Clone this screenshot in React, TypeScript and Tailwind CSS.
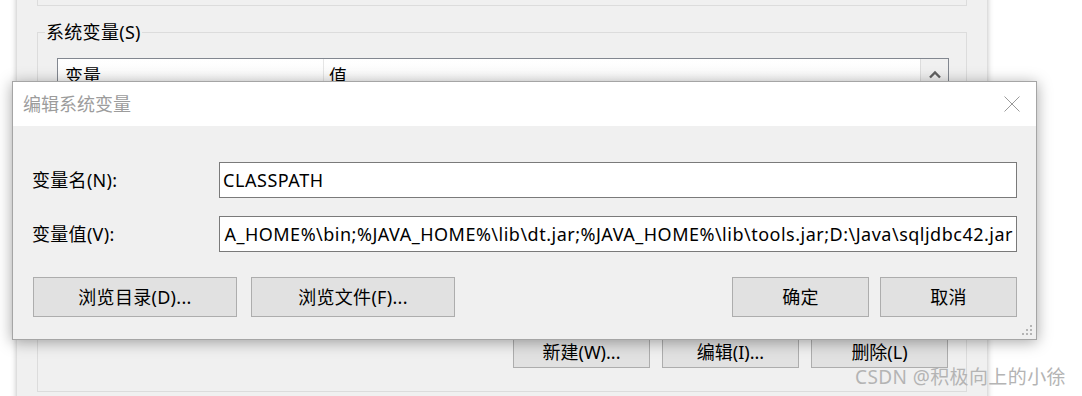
import { useState } from 'react';

const FONT = { fontFamily: '"Noto Sans", "Noto Sans CJK SC", sans-serif' };

function WinButton({ label, className = '' }: { label: string; className?: string }) {
  return (
    <button
      className={`h-[40px] bg-[#e1e1e1] border border-[#adadad] text-[18px] leading-none tracking-[0.3px] text-black flex items-center justify-center ${className}`}
    >
      {label}
    </button>
  );
}

// 背景里的 "环境变量" 窗口
function EnvWindow() {
  return (
    <div className="absolute left-[17px] top-[-40px] w-[970px] h-[460px] bg-[#f0f0f0] shadow-[0_0_6px_rgba(0,0,0,0.3)] px-[20px]">
      {/* 上面的用户变量分组只露出底边 */}
      <div className="h-[46px] border-x border-b border-[#dcdcdc]" />

      <fieldset className="mt-[16px] border border-[#dcdcdc]">
        <legend className="ml-[7px] px-[1px] text-[18px] leading-[20px] tracking-[0.3px] text-black">系统变量(S)</legend>

        <div className="pl-[19px] pb-[23px]">
          <div className="mt-[16px] w-[892px] h-[266px] bg-white border border-[#828790] flex">
            <div className="flex-1 flex flex-col">
              <div className="h-[34px] flex bg-gradient-to-b from-white to-[#f7f7f7] text-[18px] text-black">
                <div className="w-[266px] pl-[7px] flex items-center border-r border-[#e5e5e5]">变量</div>
                <div className="flex-1 pl-[5px] flex items-center">值</div>
              </div>
            </div>
            <div className="w-[28px] bg-[#f0f0f0] border-l border-[#dcdcdc] flex justify-center pt-[11px]">
              <svg width="12" height="9" viewBox="0 0 12 9">
                <path d="M1 7.5 L6 2.5 L11 7.5" fill="none" stroke="#606060" strokeWidth="2.4" />
              </svg>
            </div>
          </div>

          <div className="mt-[12px] w-[892px] flex justify-end gap-[12px] pr-[1px]">
            <button className="w-[137px] h-[32px] bg-[#e1e1e1] border border-[#adadad] text-[18px] leading-none">新建(W)...</button>
            <button className="w-[137px] h-[32px] bg-[#e1e1e1] border border-[#adadad] text-[18px] leading-none">编辑(I)...</button>
            <button className="w-[137px] h-[32px] bg-[#e1e1e1] border border-[#adadad] text-[18px] leading-none">删除(L)</button>
          </div>
        </div>
      </fieldset>
    </div>
  );
}

// 前面的 "编辑系统变量" 对话框
function EditDialog() {
  const [name] = useState('CLASSPATH');
  const [value] = useState(
    'A_HOME%\\bin;%JAVA_HOME%\\lib\\dt.jar;%JAVA_HOME%\\lib\\tools.jar;D:\\Java\\sqljdbc42.jar'
  );

  return (
    <div className="absolute left-[12px] top-[81px] w-[1025px] h-[259px] border border-[#a5a5a5] bg-[#f0f0f0] shadow-[0_2px_14px_rgba(0,0,0,0.35)] flex flex-col">
      <div className="h-[44px] bg-white flex items-center justify-between pl-[10px] pr-[16px]">
        <span className="text-[18px] text-[#9c9c9c]">编辑系统变量</span>
        <svg width="16" height="16" viewBox="0 0 16 16">
          <path d="M0.5 0.5 L15.5 15.5 M15.5 0.5 L0.5 15.5" stroke="#9a9a9a" strokeWidth="1" />
        </svg>
      </div>

      <div className="flex-1 px-[19px] pt-[36px] relative">
        <div className="flex items-center h-[36px]">
          <label className="w-[187px] text-[18px] tracking-[0.3px] text-black">变量名(N):</label>
          <div className="flex-1 h-[36px] bg-white border border-[#7a7a7a] flex items-center pl-[3px] text-[18px] tracking-[0.55px] text-black whitespace-nowrap">
            {name}
          </div>
        </div>

        <div className="flex items-center h-[36px] mt-[18px]">
          <label className="w-[187px] text-[18px] tracking-[0.3px] text-black">变量值(V):</label>
          <div className="flex-1 h-[36px] bg-white border border-[#7a7a7a] flex items-center justify-end pr-[3px] overflow-hidden text-[18px] tracking-[0.5px] text-black whitespace-nowrap">
            {value}
          </div>
        </div>

        <div className="mt-[25px] flex items-center pl-[1px]">
          <WinButton label="浏览目录(D)..." className="w-[204px]" />
          <WinButton label="浏览文件(F)..." className="w-[204px] ml-[14px]" />
          <div className="flex-1" />
          <WinButton label="确定" className="w-[137px]" />
          <WinButton label="取消" className="w-[137px] ml-[11px]" />
        </div>

        {/* 右下角的拖拽点 */}
        <svg className="absolute right-[3px] bottom-[3px]" width="12" height="12" viewBox="0 0 12 12">
          <rect x="9" y="1" width="2" height="2" fill="#b5b5b5" />
          <rect x="5" y="5" width="2" height="2" fill="#b5b5b5" />
          <rect x="9" y="5" width="2" height="2" fill="#b5b5b5" />
          <rect x="1" y="9" width="2" height="2" fill="#b5b5b5" />
          <rect x="5" y="9" width="2" height="2" fill="#b5b5b5" />
          <rect x="9" y="9" width="2" height="2" fill="#b5b5b5" />
        </svg>
      </div>
    </div>
  );
}

export default function App() {
  return (
    <div className="relative w-[1082px] h-[396px] overflow-hidden bg-white" style={FONT}>
      <EnvWindow />
      <EditDialog />

      {/* 水印 */}
      <span className="absolute left-[855px] top-[364px] text-[19px] leading-[26px] tracking-[0.4px] text-[#b4b4b4] whitespace-nowrap">
        CSDN @积极向上的小徐
      </span>
    </div>
  );
}
